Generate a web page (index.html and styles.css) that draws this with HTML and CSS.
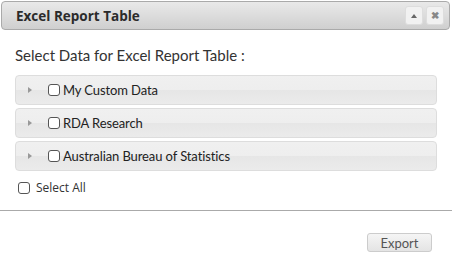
FILE: index.html
```html
<!DOCTYPE html>
<html lang="en">
<head>
  <meta charset="UTF-8" />
  <title>Excel Report Table</title>
  <link rel="stylesheet" href="styles.css">
</head>
<body>
  <div class="dialog">
    <div class="titlebar">
      <span class="title">Excel Report Table</span>
      <div class="tools">
        <button class="tool"><span class="up"></span></button>
        <button class="tool close">&#10006;</button>
      </div>
    </div>

    <div class="content">
      <h3>Select Data for Excel Report Table :</h3>
      <div class="groups">
        <div class="group"><span class="arrow"></span><span class="box"></span><span class="label">My Custom Data</span></div>
        <div class="group"><span class="arrow"></span><span class="box"></span><span class="label">RDA Research</span></div>
        <div class="group"><span class="arrow"></span><span class="box"></span><span class="label">Australian Bureau of Statistics</span></div>
      </div>
      <div class="select-all"><span class="box"></span>Select All</div>
    </div>

    <div class="footer">
      <button class="export">Export</button>
    </div>
  </div>
</body>
</html>
```

FILE: styles.css
```css
* {
  margin: 0;
  padding: 0;
  box-sizing: border-box;
}
body {
  width: 452px;
  height: 274px;
  background: #fff;
  font-family: 'Lato', sans-serif;
  color: #333;
}
.dialog {
  padding-top: 1px;
}
.titlebar {
  height: 29px;
  margin: 0 2px 0 1px;
  border: 1px solid #aaa;
  border-radius: 4px;
  background: linear-gradient(#e9e9e9, #cfcfcf);
  display: flex;
  align-items: center;
  justify-content: space-between;
  padding: 0 5px 0 14px;
}
.title {
  font-family: 'Open Sans', sans-serif;
  font-weight: 700;
  font-size: 13.5px;
  color: #2b2b2b;
}
.tools {
  display: flex;
  gap: 3px;
}
.tool {
  width: 18px;
  height: 19px;
  border: 1px solid #ddd;
  border-radius: 3px;
  background: #f1f1f1;
  color: #777;
  font-size: 10px;
  line-height: 17px;
  display: flex;
  align-items: center;
  justify-content: center;
}
.up {
  width: 0;
  height: 0;
  border-left: 3px solid transparent;
  border-right: 3px solid transparent;
  border-bottom: 4px solid #666;
}
.close {
  font-weight: 700;
  color: #888;
}
.content {
  padding: 16px 15px 0 15px;
}
h3 {
  font-weight: 400;
  font-size: 15px;
  color: #333;
  margin-bottom: 11px;
}
.groups {
  width: 422px;
  display: flex;
  flex-direction: column;
  gap: 3px;
}
.group {
  height: 30px;
  border: 1px solid #ddd;
  border-radius: 4px;
  background: linear-gradient(#f0f0f0 0, #eeeeee 50%, #e6e6e6 50%, #ebebeb 100%);
  display: flex;
  align-items: center;
  padding-left: 12px;
  font-size: 13px;
  letter-spacing: -0.1px;
  color: #222;
}
.arrow {
  width: 0;
  height: 0;
  border-top: 3.5px solid transparent;
  border-bottom: 3.5px solid transparent;
  border-left: 4px solid #999;
  margin-right: 16px;
}
.box {
  width: 12px;
  height: 12px;
  border: 1px solid #555;
  border-radius: 3px;
  background: #fff;
  margin-right: 3px;
}
.select-all {
  display: flex;
  align-items: center;
  margin: 8px 0 0 3px;
  font-family: 'Open Sans', sans-serif;
  font-size: 12px;
  color: #333;
}
.select-all .box {
  margin-right: 6px;
}
.footer {
  margin-top: 14px;
  border-top: 1px solid #aaa;
  display: flex;
  justify-content: flex-end;
  padding: 22px 20px 0 0;
}
.export {
  width: 65px;
  height: 19px;
  border: 1px solid #ccc;
  border-radius: 3px;
  background: linear-gradient(#f5f5f5, #e4e4e4);
  font-family: 'Lato', sans-serif;
  font-size: 13px;
  color: #555;
}
```
